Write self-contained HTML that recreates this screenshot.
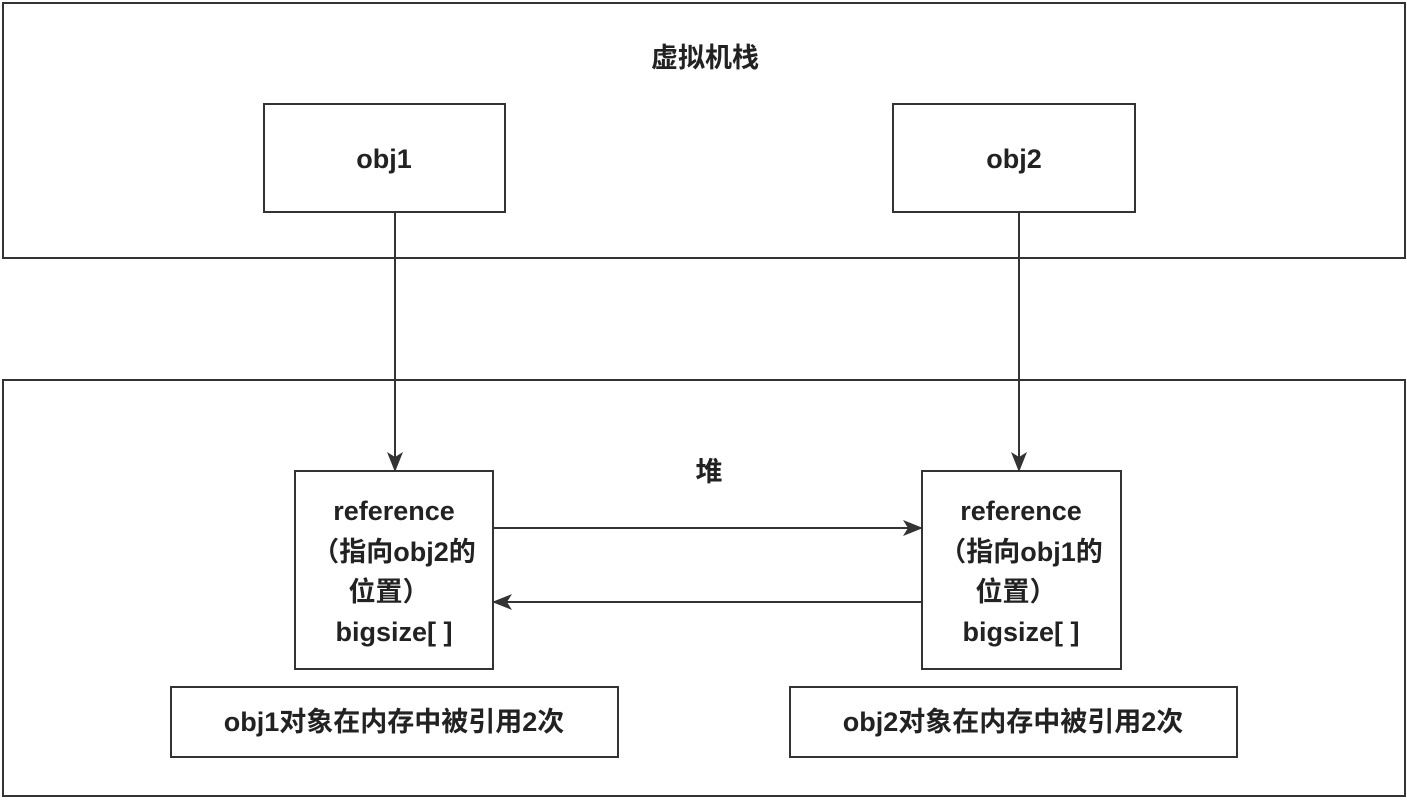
<!DOCTYPE html>
<html><head><meta charset="utf-8"><style>
html,body{margin:0;padding:0;background:#fff;}
svg text{font-family:"Liberation Sans","Noto Sans CJK SC",sans-serif;font-size:27px;font-weight:bold;fill:#222;text-anchor:middle;dominant-baseline:central;}
</style></head><body>
<svg width="1407" height="798" viewBox="0 0 1407 798" xmlns="http://www.w3.org/2000/svg">
<defs>
<marker id="b" markerWidth="20" markerHeight="20" refX="18" refY="10" orient="auto" markerUnits="userSpaceOnUse" viewBox="0 0 20 20"><path d="M0,2 L20,10 L0,18 L5,10 Z" fill="#333"/></marker></defs>
<g fill="none" stroke="#333" stroke-width="2">
<rect x="3" y="3" width="1402" height="255"/>
<rect x="3" y="380" width="1402" height="416"/>
<rect x="264" y="104" width="241" height="108"/>
<rect x="893" y="104" width="242" height="108"/>
<rect x="295" y="471" width="198" height="198"/>
<rect x="922" y="471" width="199" height="198"/>
<rect x="171" y="687" width="447" height="70"/>
<rect x="790" y="687" width="447" height="70"/>
<line x1="395" y1="212" x2="395" y2="470" marker-end="url(#b)"/>
<line x1="1019" y1="212" x2="1019" y2="470" marker-end="url(#b)"/>
<line x1="493" y1="528" x2="921" y2="528" marker-end="url(#b)"/>
<line x1="922" y1="602" x2="494" y2="602" marker-end="url(#b)"/>
</g>
<text x="705" y="58">虚拟机栈</text>
<text x="384" y="159">obj1</text>
<text x="1014" y="159">obj2</text>
<text x="709" y="472">堆</text>
<text x="394" y="511">reference</text>
<text x="394" y="552">（指向obj2的</text>
<text x="389" y="592">位置）</text>
<text x="394" y="632">bigsize[ ]</text>
<text x="1021" y="511">reference</text>
<text x="1021" y="552">（指向obj1的</text>
<text x="1016" y="592">位置）</text>
<text x="1021" y="632">bigsize[ ]</text>
<text x="394" y="722">obj1对象在内存中被引用2次</text>
<text x="1013" y="722">obj2对象在内存中被引用2次</text>
</svg>
</body></html>
